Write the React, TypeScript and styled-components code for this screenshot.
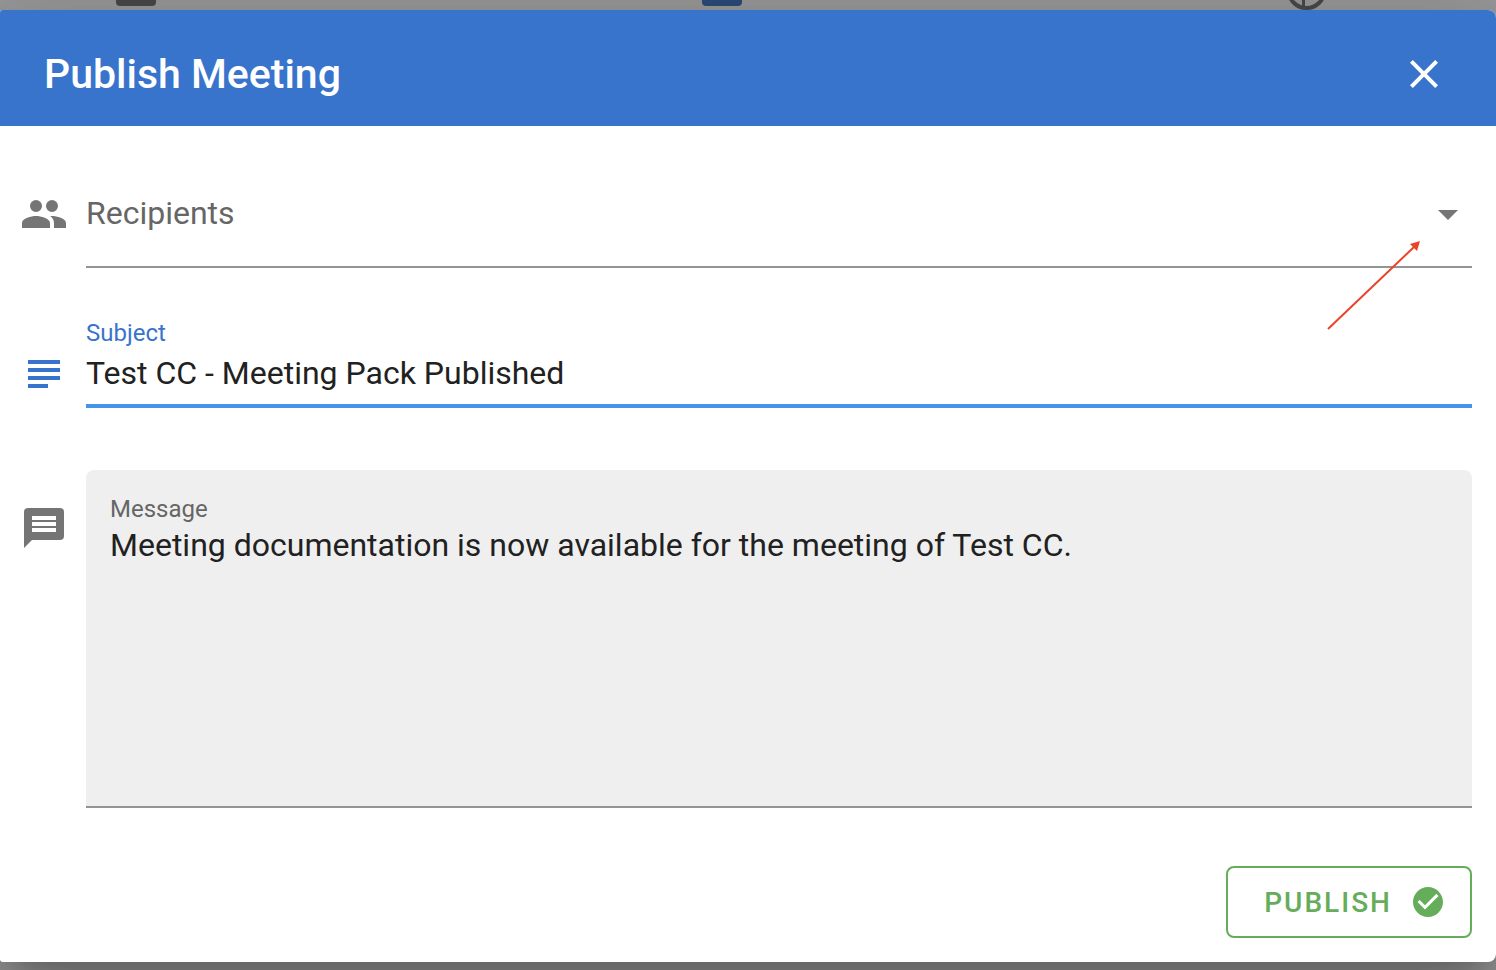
import { useState } from "react";
import styled, { createGlobalStyle } from "styled-components";

const blue = "#3874cb";
const green = "#66ad5b";

const GlobalStyle = createGlobalStyle`
  *, *::before, *::after { box-sizing: border-box; }
  body {
    margin: 0;
    background: #989898;
    font-family: Roboto, "Liberation Sans", sans-serif;
    color: #212121;
  }
  button, input, select, textarea { font: inherit; color: inherit; }
`;

const Page = styled.div`
  min-height: 100vh;
  display: flex;
  flex-direction: column;
  padding-bottom: 8px;
  overflow: hidden;
`;

const Backdrop = styled.div`
  height: 10px;
  flex: none;
  display: flex;
  justify-content: space-between;
  align-items: flex-start;
  padding: 0 168px 0 116px;
`;

const Tab = styled.div<{ $color: string }>`
  width: 40px;
  height: 6px;
  border-radius: 0 0 4px 4px;
  background: ${(p) => p.$color};
`;

const Dialog = styled.form`
  flex: 1;
  display: flex;
  flex-direction: column;
  position: relative;
  background: #fff;
  border-radius: 3px 8px 8px 3px;
  box-shadow:
    0 22px 30px -14px rgba(0, 0, 0, 0.2),
    0 48px 76px 6px rgba(0, 0, 0, 0.14),
    0 18px 92px 16px rgba(0, 0, 0, 0.12);
`;

const Header = styled.header`
  display: flex;
  align-items: center;
  justify-content: space-between;
  padding: 28px 36px 16px 44px;
  border-radius: 3px 8px 0 0;
  background: ${blue};
  color: #fff;
`;

const Title = styled.h1`
  margin: 0;
  font-size: 41px;
  line-height: 64px;
  font-weight: 500;
`;

const CloseButton = styled.button`
  display: grid;
  place-items: center;
  width: 72px;
  height: 72px;
  padding: 0;
  border: 0;
  border-radius: 50%;
  background: none;
  cursor: pointer;
`;

const Fields = styled.div`
  flex: 1;
  display: flex;
  flex-direction: column;
  gap: 48px;
  padding: 30px 24px 0 20px;
`;

const Row = styled.div<{ $grow?: boolean; $spaced?: boolean }>`
  display: flex;
  gap: 18px;
  flex: ${(p) => (p.$grow ? "1" : "none")};
  padding-bottom: ${(p) => (p.$spaced ? "14px" : "0")};
`;

const RowIcon = styled.div<{ $active?: boolean }>`
  flex: none;
  height: 48px;
  margin-top: 34px;
  color: ${(p) => (p.$active ? blue : "#757575")};
`;

const Field = styled.div<{ $filled?: boolean }>`
  position: relative;
  flex: 1;
  min-width: 0;
  display: flex;
  flex-direction: column;
  padding: ${(p) => (p.$filled ? "24px 24px 0" : "2px 0 0")};
  border-bottom: ${(p) => (p.$filled ? "2px solid #949494" : "0")};
  border-radius: ${(p) => (p.$filled ? "8px 8px 0 0" : "0")};
  background: ${(p) => (p.$filled ? "#efefef" : "none")};
`;

const Label = styled.label<{ $active?: boolean }>`
  font-size: 24px;
  line-height: 30px;
  color: ${(p) => (p.$active ? blue : "#666")};
`;

const Select = styled.select`
  appearance: none;
  width: 100%;
  height: 110px;
  padding: 2px 0 0;
  border: 0;
  border-bottom: 2px solid #949494;
  border-radius: 0;
  outline: none;
  background: none;
  font-size: 32px;
  color: #666;
`;

const Caret = styled.div`
  position: absolute;
  top: 34px;
  right: 0;
  height: 48px;
  color: #757575;
  pointer-events: none;
`;

const Pointer = styled.svg`
  position: absolute;
  top: 84px;
  right: 50px;
  pointer-events: none;
`;

const Input = styled.input`
  width: 100%;
  height: 60px;
  padding: 0 0 6px;
  border: 0;
  border-bottom: 4px solid #4693eb;
  outline: none;
  background: none;
  font-size: 32px;
`;

const TextArea = styled.textarea`
  flex: 1;
  width: 100%;
  min-height: 200px;
  padding: 0;
  border: 0;
  outline: none;
  resize: none;
  background: none;
  font-size: 32px;
  line-height: 42px;
`;

const Footer = styled.footer`
  display: flex;
  justify-content: flex-end;
  padding: 58px 24px 24px;
`;

const PublishButton = styled.button`
  display: flex;
  align-items: center;
  gap: 18px;
  height: 72px;
  padding: 0 24px 0 36px;
  border: 2px solid ${green};
  border-radius: 8px;
  background: none;
  color: ${green};
  font-size: 28px;
  font-weight: 500;
  letter-spacing: 2px;
  cursor: pointer;
`;

function Icon({ d, size = 48 }: { d: string; size?: number }) {
  return (
    <svg width={size} height={size} viewBox="0 0 24 24" fill="currentColor" aria-hidden="true">
      <path d={d} />
    </svg>
  );
}

const icons = {
  close:
    "M19,6.41L17.59,5L12,10.59L6.41,5L5,6.41L10.59,12L5,17.59L6.41,19L12,13.41L17.59,19L19,17.59L13.41,12L19,6.41Z",
  people:
    "M8 5A3 3 0 1 1 8 11A3 3 0 1 1 8 5ZM16 5A3 3 0 1 1 16 11A3 3 0 1 1 16 5ZM8 13C5.67 13 1 14.17 1 16.5V19H15V16.5C15 14.17 10.33 13 8 13ZM16 13C15.71 13 15.38 13.02 15.03 13.05C16.19 13.89 17 15.02 17 16.5V19H23V16.5C23 14.17 18.33 13 16 13Z",
  text: "M4,5H20V7H4V5M4,9H20V11H4V9M4,13H20V15H4V13M4,17H14V19H4V17Z",
  message:
    "M4,2H20A2,2 0 0,1 22,4V16A2,2 0 0,1 20,18H6L2,22V4A2,2 0 0,1 4,2M6,6V8H18V6H6M6,9V11H18V9H6M6,12V14H18V12H6Z",
  caret: "M7,10L12,15L17,10H7Z",
  check:
    "M12 2C6.5 2 2 6.5 2 12S6.5 22 12 22 22 17.5 22 12 17.5 2 12 2M10 17L5 12L6.41 10.59L10 14.17L17.59 6.58L19 8L10 17Z",
};

export default function App() {
  const [recipients, setRecipients] = useState("");
  const [subject, setSubject] = useState("Test CC - Meeting Pack Published");
  const [message, setMessage] = useState(
    "Meeting documentation is now available for the meeting of Test CC."
  );

  return (
    <>
      <GlobalStyle />
      <Page>
        <Backdrop>
          <Tab $color="#484848" />
          <Tab $color="#2a4a78" />
          <svg width="40" height="10" viewBox="0 0 40 10" fill="none" stroke="#484848" aria-hidden="true">
            <circle cx="18.5" cy="-10" r="18" strokeWidth="4" />
            <path d="M15.5 0V8" strokeWidth="3" />
          </svg>
        </Backdrop>
        <Dialog onSubmit={(e) => e.preventDefault()}>
          <Header>
            <Title>Publish Meeting</Title>
            <CloseButton type="button" aria-label="Close">
              <Icon d={icons.close} />
            </CloseButton>
          </Header>
          <Fields>
            <Row>
              <RowIcon>
                <Icon d={icons.people} />
              </RowIcon>
              <Field>
                <Select
                  aria-label="Recipients"
                  value={recipients}
                  onChange={(e) => setRecipients(e.target.value)}
                >
                  <option value="">Recipients</option>
                </Select>
                <Caret>
                  <Icon d={icons.caret} />
                </Caret>
                <Pointer width="96" height="92" viewBox="0 0 96 92" aria-hidden="true">
                  <path d="M2 89L88 7" stroke="#ea4427" strokeWidth="2" />
                  <path d="M94 1L91 11L84 4Z" fill="#ea4427" />
                </Pointer>
              </Field>
            </Row>
            <Row $spaced>
              <RowIcon $active>
                <Icon d={icons.text} />
              </RowIcon>
              <Field>
                <Label htmlFor="subject" $active>
                  Subject
                </Label>
                <Input id="subject" value={subject} onChange={(e) => setSubject(e.target.value)} />
              </Field>
            </Row>
            <Row $grow>
              <RowIcon>
                <Icon d={icons.message} />
              </RowIcon>
              <Field $filled>
                <Label htmlFor="message">Message</Label>
                <TextArea id="message" value={message} onChange={(e) => setMessage(e.target.value)} />
              </Field>
            </Row>
          </Fields>
          <Footer>
            <PublishButton type="submit">
              PUBLISH
              <Icon d={icons.check} size={36} />
            </PublishButton>
          </Footer>
        </Dialog>
      </Page>
    </>
  );
}
